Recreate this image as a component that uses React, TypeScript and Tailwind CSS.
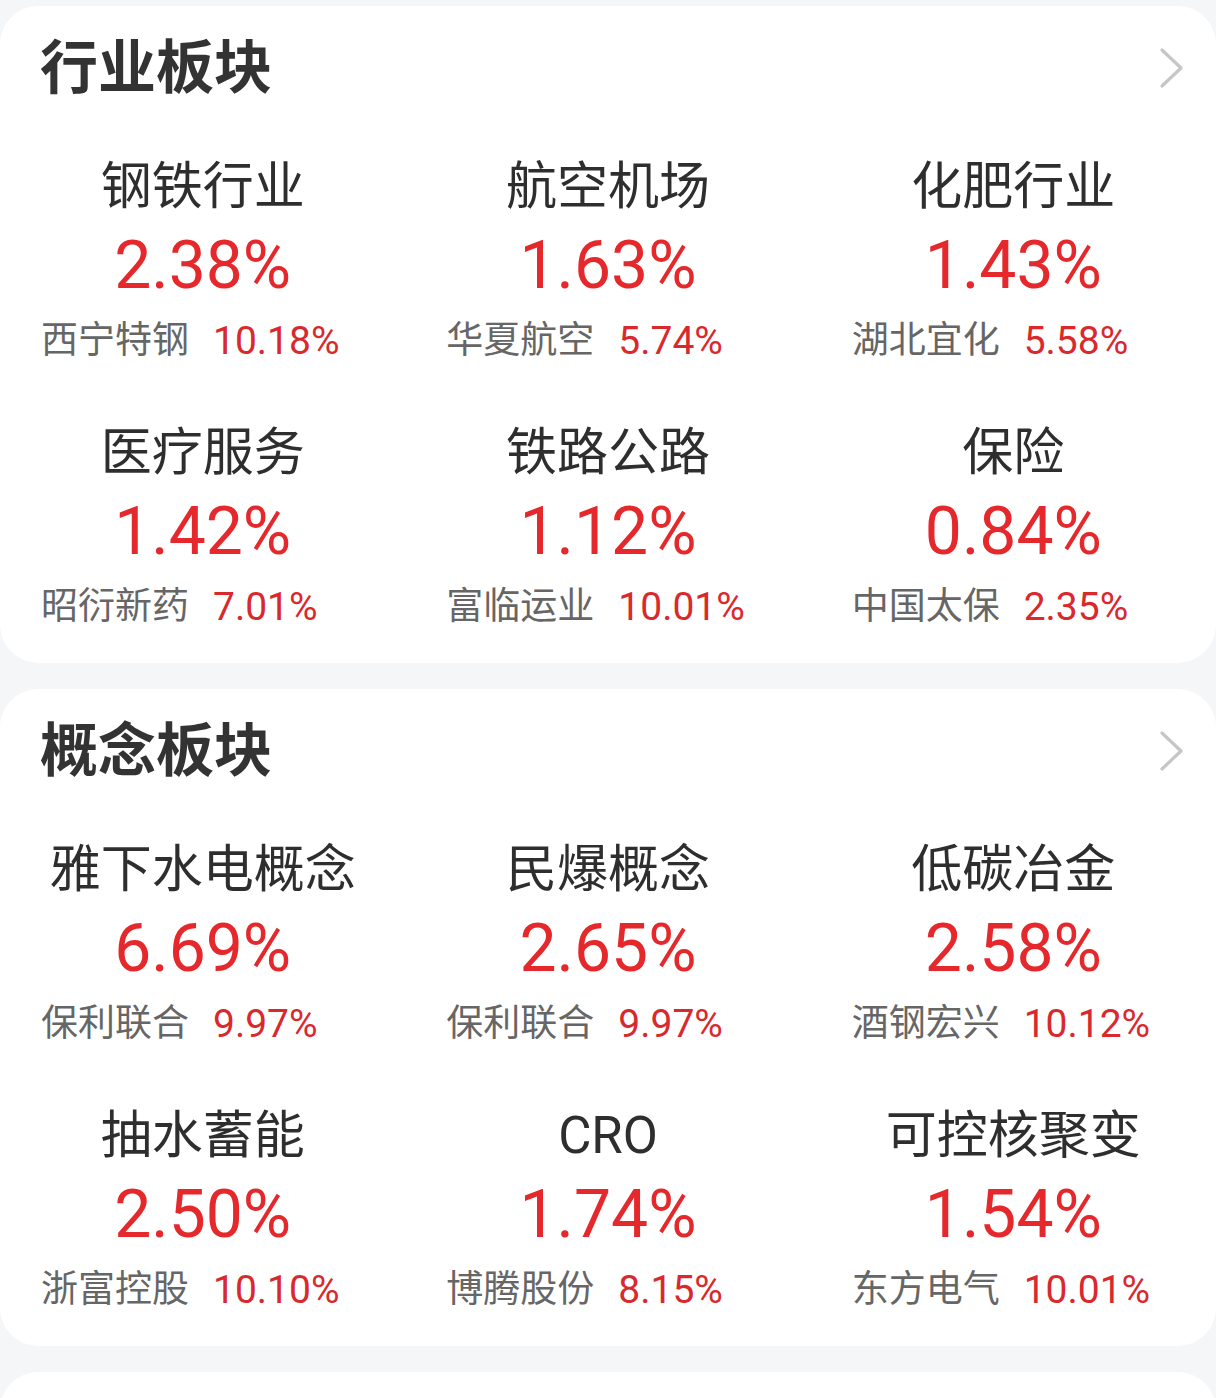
type Sector = { name: string; pct: string; stock: string; stockPct: string };

const industry: Sector[] = [
  { name: "钢铁行业", pct: "2.38%", stock: "西宁特钢", stockPct: "10.18%" },
  { name: "航空机场", pct: "1.63%", stock: "华夏航空", stockPct: "5.74%" },
  { name: "化肥行业", pct: "1.43%", stock: "湖北宜化", stockPct: "5.58%" },
  { name: "医疗服务", pct: "1.42%", stock: "昭衍新药", stockPct: "7.01%" },
  { name: "铁路公路", pct: "1.12%", stock: "富临运业", stockPct: "10.01%" },
  { name: "保险", pct: "0.84%", stock: "中国太保", stockPct: "2.35%" },
];

const concept: Sector[] = [
  { name: "雅下水电概念", pct: "6.69%", stock: "保利联合", stockPct: "9.97%" },
  { name: "民爆概念", pct: "2.65%", stock: "保利联合", stockPct: "9.97%" },
  { name: "低碳冶金", pct: "2.58%", stock: "酒钢宏兴", stockPct: "10.12%" },
  { name: "抽水蓄能", pct: "2.50%", stock: "浙富控股", stockPct: "10.10%" },
  { name: "CRO", pct: "1.74%", stock: "博腾股份", stockPct: "8.15%" },
  { name: "可控核聚变", pct: "1.54%", stock: "东方电气", stockPct: "10.01%" },
];

const font = "font-['Roboto','Noto_Sans_CJK_SC',sans-serif]";

function Chevron() {
  return (
    <svg width="26" height="42" viewBox="0 0 26 42" fill="none" className="shrink-0">
      <path d="M3 3 L22 21 L3 39" stroke="#c6c6c6" strokeWidth="3.2" strokeLinecap="round" strokeLinejoin="round" />
    </svg>
  );
}

function SectorCell({ s }: { s: Sector }) {
  return (
    <div className="flex flex-col">
      <div className="text-center text-[51px] leading-[60px] text-[#2e2e2e]">{s.name}</div>
      <div className="mt-[13px] text-center text-[66px] leading-[72px] text-[#e5282b]">{s.pct}</div>
      <div className="mt-[17px] flex items-center gap-[24px] pl-[41px] leading-[44px]">
        <span className="text-[37px] text-[#666666]">{s.stock}</span>
        <span className="text-[39px] text-[#d9292d]">{s.stockPct}</span>
      </div>
    </div>
  );
}

function Board({ title, items }: { title: string; items: Sector[] }) {
  return (
    <section className="rounded-[38px] bg-white pt-[28px] pb-[34px]">
      <div className="flex items-center justify-between pl-[40px] pr-[31px]">
        <h2 className="text-[58px] leading-[68px] font-bold text-[#333333]">{title}</h2>
        <Chevron />
      </div>
      <div className="mt-[55px] grid grid-cols-3 gap-y-[60px]">
        {items.map((s) => (
          <SectorCell key={s.name} s={s} />
        ))}
      </div>
    </section>
  );
}

export default function App() {
  return (
    <div className={`${font} h-[1398px] w-[1216px] overflow-hidden bg-[#f5f6f8] pt-[6px] flex flex-col gap-[26px]`}>
      <Board title="行业板块" items={industry} />
      <Board title="概念板块" items={concept} />
      <section className="h-[120px] shrink-0 rounded-t-[38px] bg-white" />
    </div>
  );
}
